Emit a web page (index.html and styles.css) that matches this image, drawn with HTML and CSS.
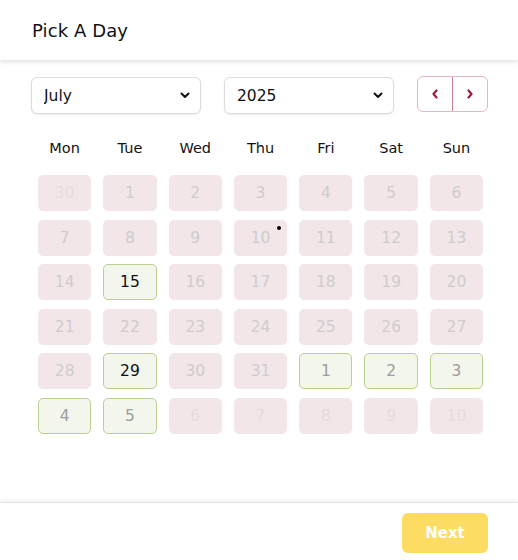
FILE: index.html
```html
<!DOCTYPE html>
<html>
<head>
    <title>Pick A Day</title>
    <link rel="stylesheet" href="styles.css">
</head>
<body>
    <div class="page">
        <header class="top-bar">
            <h1>Pick A Day</h1>
        </header>

        <main class="content">
            <div class="controls">
                <div class="select-wrap">
                    <select class="picker">
                        <option selected>July</option>
                        <option>August</option>
                    </select>
                    <svg class="caret" width="10" height="7" viewBox="0 0 10 7"><path d="M1.5 1.5 L5 5 L8.5 1.5" fill="none" stroke="#111" stroke-width="2" stroke-linecap="round" stroke-linejoin="round"/></svg>
                </div>
                <div class="select-wrap">
                    <select class="picker">
                        <option selected>2025</option>
                        <option>2026</option>
                    </select>
                    <svg class="caret" width="10" height="7" viewBox="0 0 10 7"><path d="M1.5 1.5 L5 5 L8.5 1.5" fill="none" stroke="#111" stroke-width="2" stroke-linecap="round" stroke-linejoin="round"/></svg>
                </div>
                <div class="nav">
                    <button class="nav-btn">
                        <svg width="8" height="10" viewBox="0 0 8 10"><path d="M5.5 1.5 L2.5 5 L5.5 8.5" fill="none" stroke="#9e1b3b" stroke-width="2.2" stroke-linecap="round" stroke-linejoin="round"/></svg>
                    </button>
                    <button class="nav-btn">
                        <svg width="8" height="10" viewBox="0 0 8 10"><path d="M2.5 1.5 L5.5 5 L2.5 8.5" fill="none" stroke="#9e1b3b" stroke-width="2.2" stroke-linecap="round" stroke-linejoin="round"/></svg>
                    </button>
                </div>
            </div>

            <div class="weekdays">
                <span>Mon</span><span>Tue</span><span>Wed</span><span>Thu</span><span>Fri</span><span>Sat</span><span>Sun</span>
            </div>

            <div class="days">
                <div class="day outside">30</div>
                <div class="day">1</div>
                <div class="day">2</div>
                <div class="day">3</div>
                <div class="day">4</div>
                <div class="day">5</div>
                <div class="day">6</div>

                <div class="day">7</div>
                <div class="day">8</div>
                <div class="day">9</div>
                <div class="day">10<span class="dot"></span></div>
                <div class="day">11</div>
                <div class="day">12</div>
                <div class="day">13</div>

                <div class="day">14</div>
                <div class="day open">15</div>
                <div class="day">16</div>
                <div class="day">17</div>
                <div class="day">18</div>
                <div class="day">19</div>
                <div class="day">20</div>

                <div class="day">21</div>
                <div class="day">22</div>
                <div class="day">23</div>
                <div class="day">24</div>
                <div class="day">25</div>
                <div class="day">26</div>
                <div class="day">27</div>

                <div class="day">28</div>
                <div class="day open">29</div>
                <div class="day">30</div>
                <div class="day">31</div>
                <div class="day open next-month">1</div>
                <div class="day open next-month">2</div>
                <div class="day open next-month">3</div>

                <div class="day open next-month">4</div>
                <div class="day open next-month">5</div>
                <div class="day outside">6</div>
                <div class="day outside">7</div>
                <div class="day outside">8</div>
                <div class="day outside">9</div>
                <div class="day outside">10</div>
            </div>
        </main>

        <footer class="bottom-bar">
            <button class="next-btn">Next</button>
        </footer>
    </div>
</body>
</html>
```

FILE: styles.css
```css
* {
    box-sizing: border-box;
}
body {
    margin: 0;
    font-family: "DejaVu Sans", sans-serif;
    background: #fff;
    color: #111;
}
.page {
    height: 560px;
    display: flex;
    flex-direction: column;
}
.top-bar {
    height: 60px;
    padding: 0 32px;
    display: flex;
    align-items: center;
    box-shadow: 0 2px 4px rgba(0, 0, 0, 0.12);
    position: relative;
}
.top-bar h1 {
    margin: 0;
    font-size: 18px;
    font-weight: 500;
    letter-spacing: 0.1px;
}
.content {
    flex: 1;
    padding: 16px 30px 0 31px;
}
.controls {
    display: flex;
    align-items: flex-start;
    gap: 23px;
}
.select-wrap {
    position: relative;
    width: 170px;
}
.picker {
    appearance: none;
    -webkit-appearance: none;
    width: 100%;
    height: 37px;
    margin-top: 1px;
    padding: 0 12px;
    font-family: inherit;
    font-size: 15.5px;
    color: #111;
    background: #fff;
    border: 1px solid #dcdcdc;
    border-radius: 6px;
    box-shadow: 0 1px 2px rgba(0, 0, 0, 0.08);
}
.caret {
    position: absolute;
    right: 11px;
    top: 16px;
    pointer-events: none;
}
.nav {
    display: flex;
    width: 71px;
    height: 36px;
    border: 1px solid #e2b8c1;
    border-radius: 6px;
}
.nav-btn {
    flex: 1;
    border: 0;
    background: none;
    padding: 0;
    display: flex;
    align-items: center;
    justify-content: center;
}
.nav-btn + .nav-btn {
    border-left: 1px solid #c98393;
}
.weekdays,
.days {
    display: grid;
    grid-template-columns: repeat(7, 53.3px);
    column-gap: 12px;
    margin-left: 7px;
}
.weekdays {
    margin-top: 19px;
    height: 30px;
    margin-bottom: 12px;
}
.weekdays span {
    text-align: center;
    line-height: 30px;
    font-size: 14.5px;
}
.days {
    row-gap: 8.6px;
}
.day {
    position: relative;
    height: 36px;
    display: flex;
    align-items: center;
    justify-content: center;
    background: #f3e6e8;
    border: 1px solid #f3e6e8;
    border-radius: 5px;
    color: #cdcdcd;
    font-size: 15.5px;
}
.day.outside {
    color: #e6dcdd;
}
.day.open {
    background: #f3f6ec;
    border-color: #b8d18d;
    color: #111;
}
.day.next-month {
    color: #9c9c9c;
}
.dot {
    position: absolute;
    top: 5px;
    right: 5px;
    width: 4px;
    height: 4px;
    border-radius: 50%;
    background: #000;
}
.bottom-bar {
    height: 58px;
    border-top: 1px solid #e4e4e4;
    box-shadow: 0 -2px 4px rgba(0, 0, 0, 0.06);
    display: flex;
    justify-content: flex-end;
    padding: 10px 30px 0 0;
}
.next-btn {
    width: 86px;
    height: 40px;
    border: 0;
    border-radius: 6px;
    background: #fcdc63;
    color: #fff;
    font-family: inherit;
    font-weight: bold;
    font-size: 15px;
}
```
